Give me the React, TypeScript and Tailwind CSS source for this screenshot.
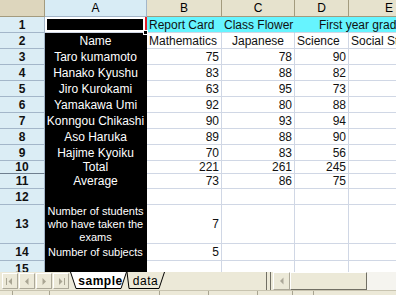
import clsx from 'clsx';

const scores = [
  { n: '3', a: 'Taro kumamoto', b: '75', c: '78', d: '90' },
  { n: '4', a: 'Hanako Kyushu', b: '83', c: '88', d: '82' },
  { n: '5', a: 'Jiro Kurokami', b: '63', c: '95', d: '73' },
  { n: '6', a: 'Yamakawa Umi', b: '92', c: '80', d: '88' },
  { n: '7', a: 'Konngou Chikashi', b: '90', c: '93', d: '94' },
  { n: '8', a: 'Aso Haruka', b: '89', c: '88', d: '90' },
  { n: '9', a: 'Hajime Kyoiku', b: '70', c: '83', d: '56' },
  { n: '10', a: 'Total', b: '221', c: '261', d: '245' },
  { n: '11', a: 'Average', b: '73', c: '86', d: '75' },
];

function RowHead({ n, className }: { n: string; className?: string }) {
  return (
    <div className={clsx('bg-[#dbedf5] border-r border-b border-[#a3b6c9] flex justify-center text-[12px] font-bold leading-none text-[#111]', className ?? 'items-center')}>
      {n}
    </div>
  );
}

function ColHead({ label, active }: { label: string; active?: boolean }) {
  return (
    <div className={clsx('border-r border-b flex items-center justify-center text-[12px] leading-none text-black', active ? 'bg-[#d8ecf5] border-[#a3b6c9]' : 'bg-[#e6e2cd] border-[#a39b7e]')}>
      {label}
    </div>
  );
}

function Cell({ children, className }: { children?: React.ReactNode; className?: string }) {
  return (
    <div className={clsx('border-r border-b border-[#d0d7e5] flex items-center whitespace-nowrap px-[2px] leading-none', className)}>
      {children}
    </div>
  );
}

function NameCell({ children, wrap, className }: { children?: React.ReactNode; wrap?: boolean; className?: string }) {
  return (
    <div className={clsx('bg-black text-white border-r border-b border-black flex items-center text-center', wrap ? 'whitespace-normal' : 'whitespace-nowrap leading-none', className ?? 'justify-center')}>
      {children}
    </div>
  );
}

function Arrow({ dir, bar }: { dir: 'l' | 'r'; bar?: boolean }) {
  return (
    <svg width="10" height="9" viewBox="0 0 10 9" className="shrink-0">
      {dir === 'l' ? (
        <>
          {bar && <rect x="1" y="1" width="1" height="7" fill="#a9a593" />}
          <path d={bar ? 'M7 1 L3.5 4.5 L7 8 Z' : 'M6.5 1 L3 4.5 L6.5 8 Z'} fill="#a9a593" />
        </>
      ) : (
        <>
          {bar && <rect x="8" y="1" width="1" height="7" fill="#a9a593" />}
          <path d={bar ? 'M3 1 L6.5 4.5 L3 8 Z' : 'M3.5 1 L7 4.5 L3.5 8 Z'} fill="#a9a593" />
        </>
      )}
    </svg>
  );
}

const navButtons: ['l' | 'r', boolean][] = [['l', true], ['l', false], ['r', false], ['r', true]];

export default function App() {
  return (
    <div className="w-[396px] h-[295px] bg-white overflow-hidden flex flex-col font-['Liberation_Sans',Arial,sans-serif] text-[12px] text-[#111]">
      <div className="h-[272px] shrink-0 overflow-hidden grid grid-cols-[45px_102px_75px_73px_54px_1fr] grid-rows-[17px_repeat(9,16px)_13px_15px_16px_39px_17px_16px]">
        {/* column headers */}
        <div className="bg-[#ddd6bd] border-r border-b border-[#a39b7e]" />
        <ColHead label="A" active />
        <ColHead label="B" />
        <ColHead label="C" />
        <ColHead label="D" />
        <ColHead label="E" />

        {/* row 1 */}
        <RowHead n="1" />
        <div className="relative bg-white border-b border-[#d0d7e5] border-r-2 border-r-[#e0202a] p-[2px]">
          <div className="w-full h-full bg-black" />
          <div className="absolute -right-[3px] -bottom-[3px] w-[5px] h-[5px] bg-black border border-white" />
        </div>
        <Cell className="bg-[#66f4ff] border-r-[#66f4ff]">Report Card</Cell>
        <Cell className="bg-[#66f4ff] border-r-[#66f4ff]">Class Flower</Cell>
        <Cell className="bg-[#66f4ff] border-r-[#66f4ff] relative z-10 overflow-visible pl-[24px]">First year grade</Cell>
        <Cell className="bg-[#66f4ff] border-r-[#66f4ff]" />

        {/* row 2 */}
        <RowHead n="2" />
        <NameCell>Name</NameCell>
        <Cell>Mathematics</Cell>
        <Cell className="justify-center">Japanese</Cell>
        <Cell>Science</Cell>
        <Cell>Social Studies</Cell>

        {scores.map((r) => (
          <div key={r.n} className="contents">
            <RowHead n={r.n} className={r.n === '10' ? 'items-center border-b-[#6f7f8f]' : undefined} />
            <NameCell>{r.a}</NameCell>
            <Cell className="justify-end">{r.b}</Cell>
            <Cell className="justify-end">{r.c}</Cell>
            <Cell className="justify-end">{r.d}</Cell>
            <Cell />
          </div>
        ))}

        {/* row 12 */}
        <RowHead n="12" />
        <NameCell />
        <Cell />
        <Cell />
        <Cell />
        <Cell />

        {/* row 13 */}
        <RowHead n="13" />
        <NameCell wrap className="justify-center text-[11px] leading-[13px] px-[1px]">
          Number of students who have taken the exams
        </NameCell>
        <Cell className="justify-end">7</Cell>
        <Cell />
        <Cell />
        <Cell />

        {/* row 14 */}
        <RowHead n="14" />
        <NameCell className="justify-start pl-[3px] text-[11px]">Number of subjects</NameCell>
        <Cell className="justify-end">5</Cell>
        <Cell />
        <Cell />
        <Cell />

        {/* row 15 */}
        <RowHead n="15" className="items-start pt-[2px]" />
        <NameCell />
        <Cell />
        <Cell />
        <Cell />
        <Cell />
      </div>

      {/* sheet tabs + horizontal scrollbar */}
      <div className="h-[18px] shrink-0 bg-[#ece9d8] grid grid-cols-[70px_95px_1fr_130px]">
        <div className="flex items-center gap-[1px] pl-[2px]">
          {navButtons.map(([d, b], i) => (
            <div key={i} className="w-[16px] h-[16px] border border-t-[#ffffff] border-l-[#ffffff] border-r-[#aca899] border-b-[#aca899] bg-[#ece9d8] flex items-center justify-center">
              <Arrow dir={d} bar={b} />
            </div>
          ))}
        </div>
        <div className="flex">
          <div className="relative h-[17px] w-[57px] z-10 flex items-center justify-center">
            <svg className="absolute inset-0" width={57} height={17} viewBox="0 0 57 17">
              <path d="M0.5 0 L6 16.5 L51 16.5 L56.5 0" fill="#ffffff" stroke="#000" strokeWidth="1" />
            </svg>
            <span className="relative text-[12px] leading-none text-black tracking-[0.5px] font-bold pl-[4px]">sample</span>
          </div>
          <div className="relative h-[17px] w-[42px] -ml-[4px] flex items-center justify-center">
            <svg className="absolute inset-0" width={42} height={17} viewBox="0 0 42 17">
              <path d="M4 0 L6 16.5 L36 16.5 L41.5 0" fill="#ece9d8" stroke="#000" strokeWidth="1" />
            </svg>
            <span className="relative text-[12px] leading-none text-black tracking-[0.5px] pl-[3px]">data</span>
          </div>
        </div>
        <div />
        <div className="flex items-stretch">
          <div className="w-[5px] border-l border-r border-[#716f64]" />
          <div className="w-[2px]" />
          <div className="w-[17px] border border-t-[#ffffff] border-l-[#ffffff] border-r-[#aca899] border-b-[#aca899] flex items-center justify-center">
            <svg width="6" height="8" viewBox="0 0 6 8">
              <path d="M4.5 0.5 L1 4 L4.5 7.5 Z" fill="#aca899" />
            </svg>
          </div>
          <div className="w-[77px] bg-[#ece9d8] border border-t-[#ffffff] border-l-[#ffffff] border-r-[#716f64] border-b-[#716f64]" />
          <div className="w-[29px] bg-[#f5f4ef]" />
        </div>
      </div>

      {/* status strip */}
      <div className="flex-1 bg-[#ece9d8] border-t border-[#c8c4b0] flex">
        <div className="w-[13px] border-r border-[#a8a490]" />
        <div className="w-[37px] border-r border-[#a8a490]" />
        <div className="w-[110px] border-r border-[#a8a490]" />
        <div className="w-[49px] border-r border-[#a8a490]" />
        <div className="w-[49px] border-r border-[#a8a490]" />
        <div className="w-[35px] border-r border-[#a8a490]" />
        <div className="w-[21px] border-r border-[#a8a490]" />
      </div>
    </div>
  );
}
